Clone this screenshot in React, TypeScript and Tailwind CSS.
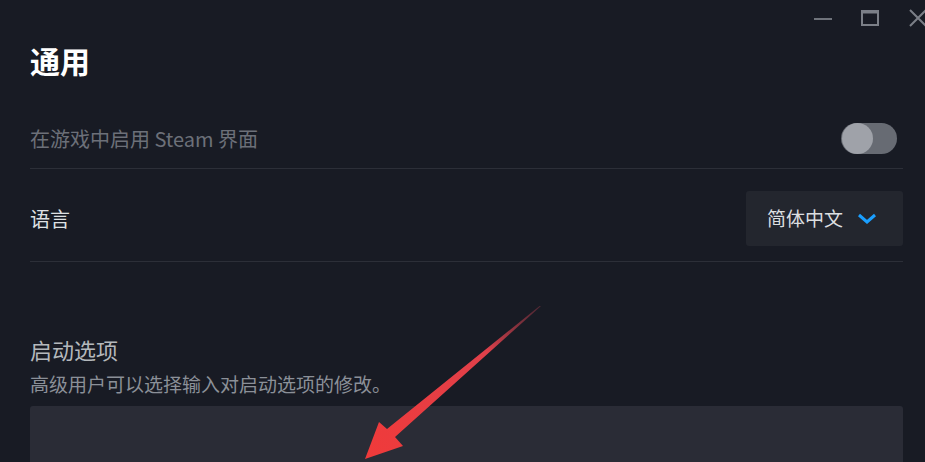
import React from 'react';

const font = { fontFamily: '"Noto Sans CJK SC", "Noto Sans", sans-serif' };

const WindowControls = () => (
  <div className="flex h-[36px] items-start justify-end pt-[9px]">
    <svg width="20" height="18" viewBox="0 0 20 18" className="mr-[27px]">
      <path d="M1 10h18" stroke="#6f737b" strokeWidth="2" />
    </svg>
    <svg width="20" height="18" viewBox="0 0 20 18" className="mr-[28px]">
      <rect x="2" y="2" width="16" height="14" fill="none" stroke="#7b7f87" strokeWidth="2" />
      <path d="M2 3h16" stroke="#7b7f87" strokeWidth="3" />
    </svg>
    <svg width="20" height="18" viewBox="0 0 20 18" className="-mr-[3px]">
      <path d="M2 1l16 16M18 1L2 17" stroke="#7b7f87" strokeWidth="2" />
    </svg>
  </div>
);

const Toggle = () => (
  <div className="relative mr-[6px] h-[31px] w-[56px] rounded-full bg-[#676b73]">
    <div className="absolute left-[1px] top-0 h-[31px] w-[31px] rounded-full bg-[#9fa2a9]" />
  </div>
);

const Arrow = () => (
  <svg className="pointer-events-none absolute left-0 top-0" width="925" height="462">
    <defs>
      <linearGradient id="ag" x1="540" y1="307" x2="366" y2="458" gradientUnits="userSpaceOnUse">
        <stop offset="0" stopColor="#a23a4a" stopOpacity="0.4" />
        <stop offset="0.3" stopColor="#e0404a" />
        <stop offset="1" stopColor="#f03a3a" />
      </linearGradient>
    </defs>
    <polygon
      points="541,306 395,437 403,446 365,459 379,422 387,429 539.5,306"
      fill="url(#ag)"
    />
  </svg>
);

export default function App() {
  return (
    <div className="relative h-[462px] w-[925px] overflow-hidden bg-[#181b24]" style={font}>
      <WindowControls />

      <div className="pl-[30px] pr-[22px]">
        <div className="mt-[4px] h-[69px] text-[30px] font-bold leading-[40px] text-white">通用</div>

        {/* Overlay toggle */}
        <div className="flex h-[60px] items-center justify-between border-b border-[#2c2f38]">
          <span className="text-[20px] text-[#6c7079]">在游戏中启用 Steam 界面</span>
          <Toggle />
        </div>

        {/* Language */}
        <div className="flex items-center justify-between border-b border-[#2c2f38] pb-[15px] pt-[22px]">
          <span className="text-[20px] text-[#dfe1e3]">语言</span>
          <div className="flex h-[55px] w-[157px] items-center rounded-[3px] bg-[#23262e] pl-[21px]">
            <span className="text-[19px] text-[#dcdee0]">简体中文</span>
            <svg width="20" height="12" viewBox="0 0 20 12" className="ml-[14px]">
              <path d="M2 2l8 7 8-7" fill="none" stroke="#1a9fff" strokeWidth="3" />
            </svg>
          </div>
        </div>

        {/* Launch options */}
        <div className="mt-[72px] text-[22px] leading-[30px] text-[#b4b8bc]">启动选项</div>
        <div className="mt-[8px] text-[19px] leading-[24px] text-[#8b9098]">
          高级用户可以选择输入对启动选项的修改。
        </div>
        <div className="mt-[10px] h-[80px] rounded-[3px] bg-[#2a2c36]" />
      </div>

      <Arrow />
    </div>
  );
}
